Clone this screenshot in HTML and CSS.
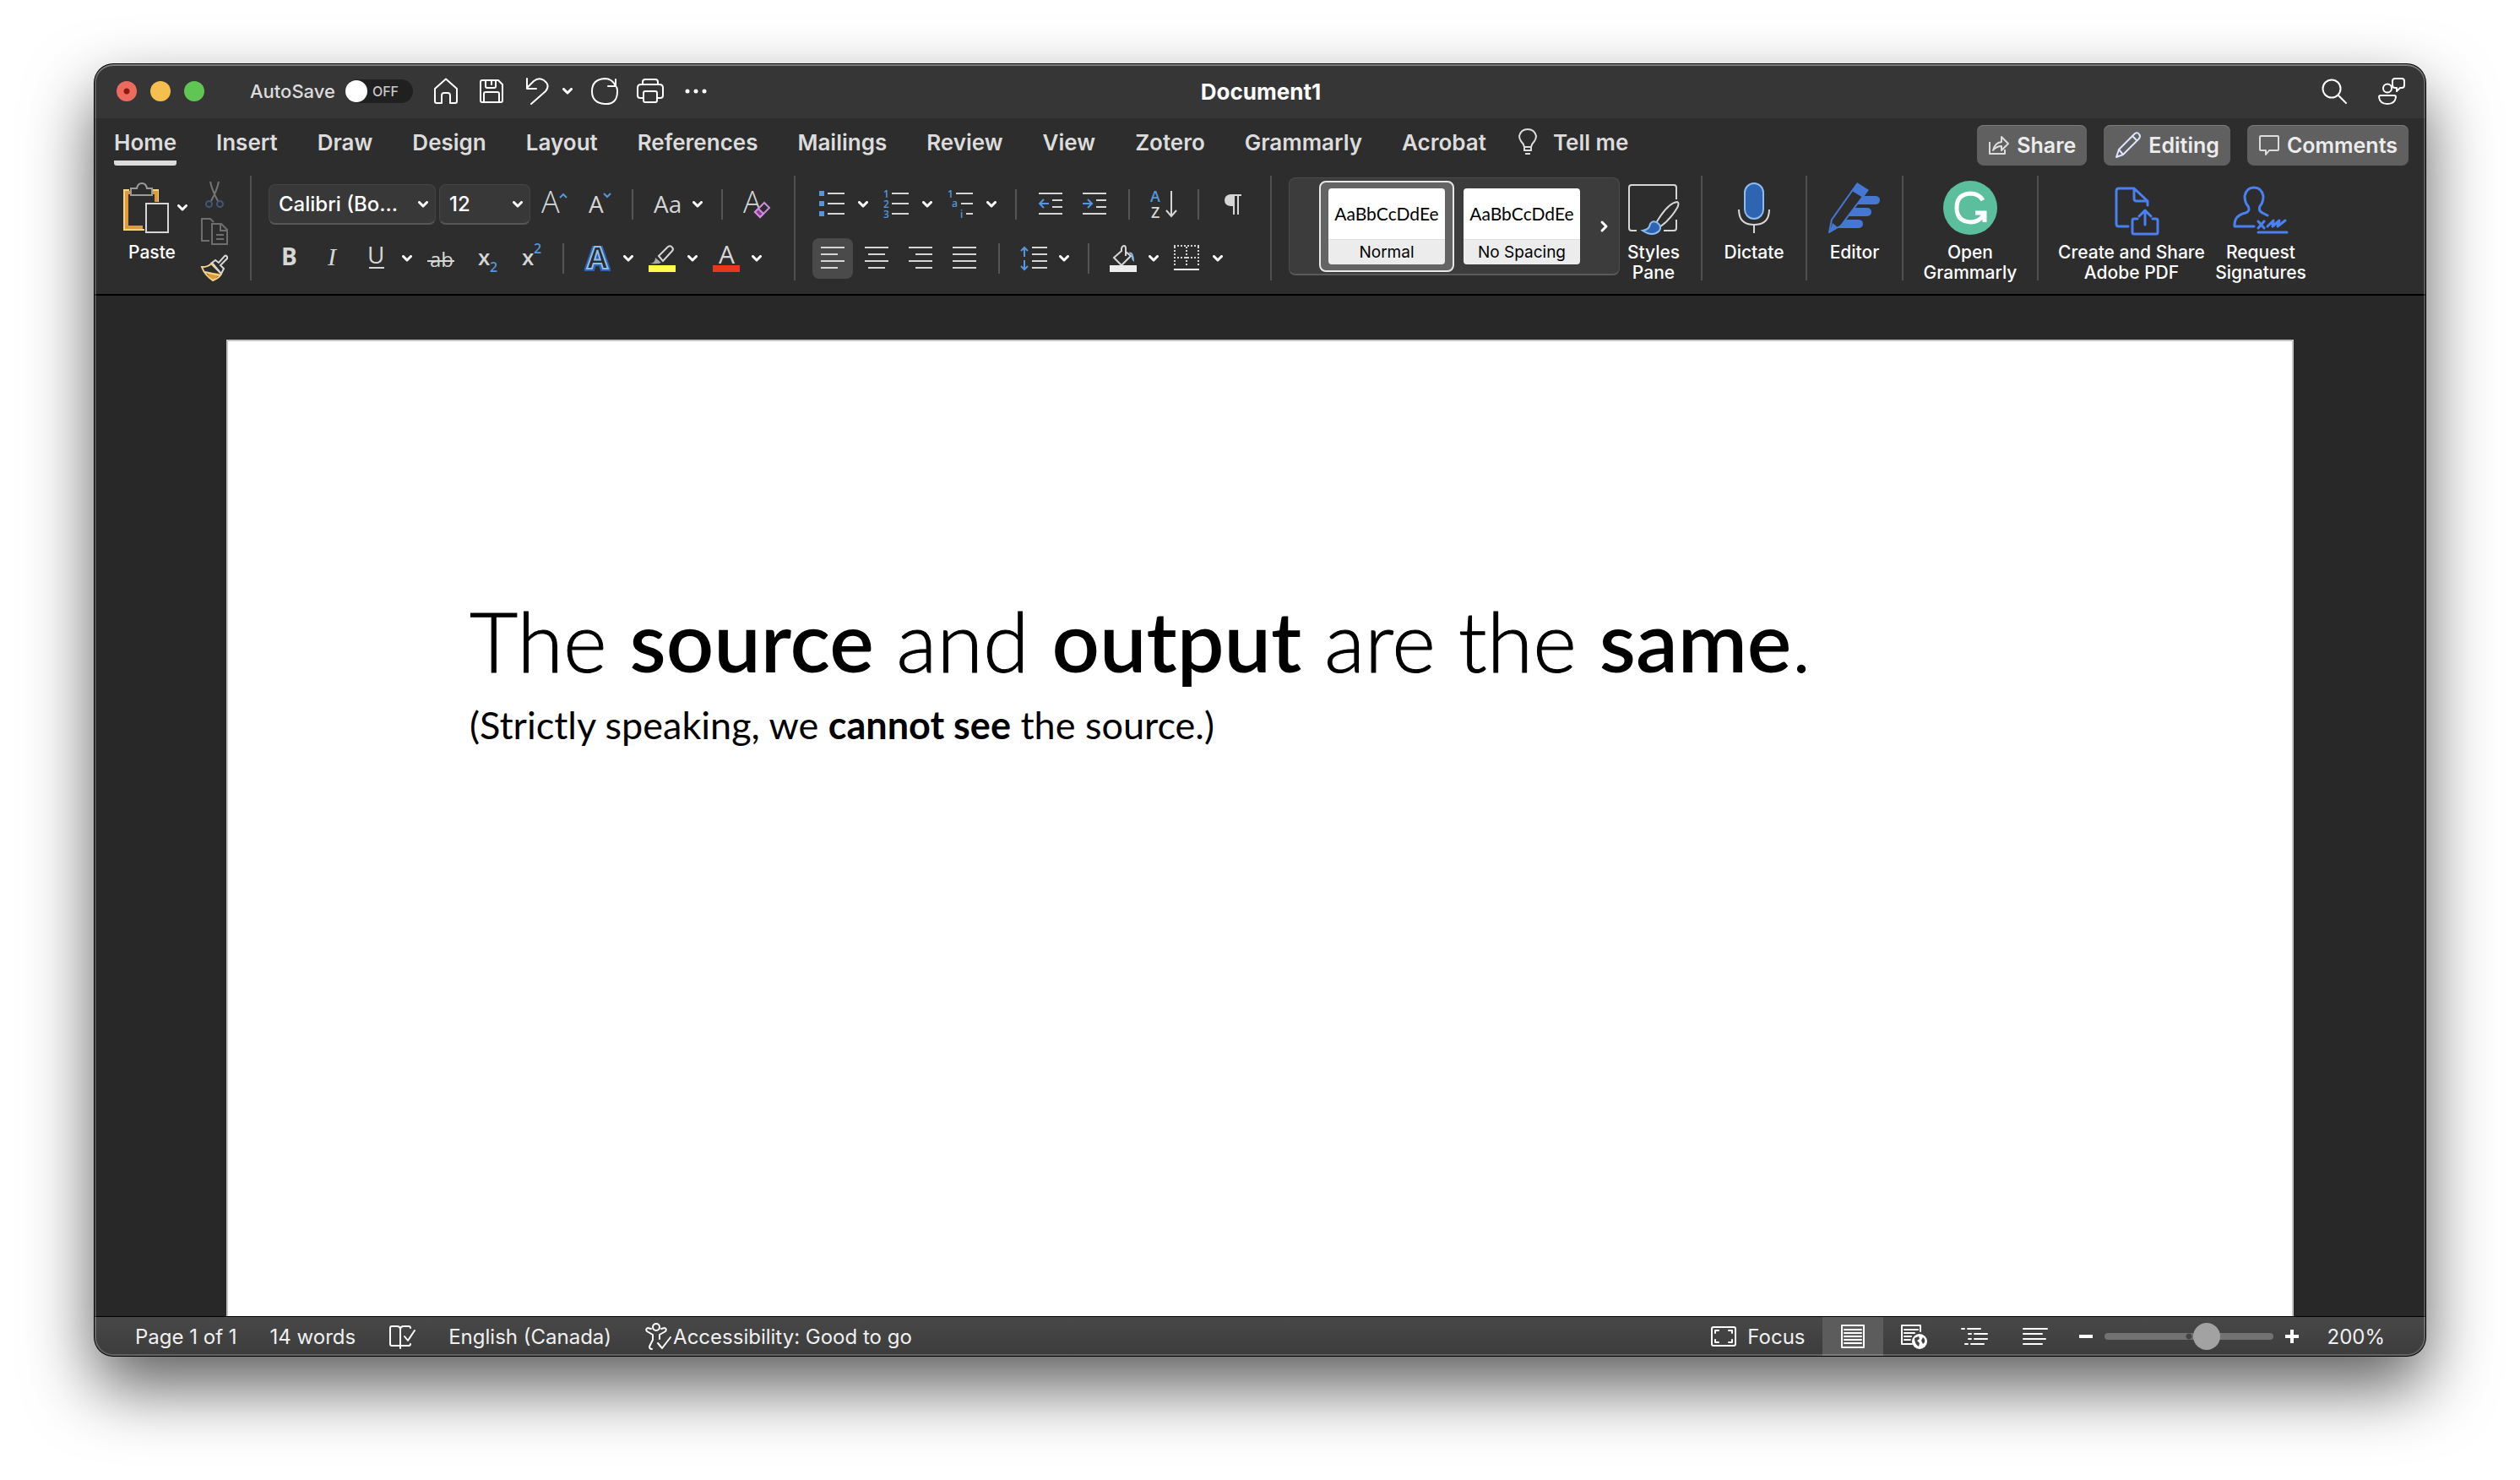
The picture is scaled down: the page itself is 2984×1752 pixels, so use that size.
FILE: index.html
```html
<!DOCTYPE html>
<html lang="en">
<head>
<meta charset="utf-8">
<title>Document1</title>
<link rel="stylesheet" href="styles.css">
</head>
<body>
<svg class="defs" aria-hidden="true">
  <symbol id="chev" viewBox="0 0 12 8"><path d="M1.5 1.5 6 6l4.500-4.500" fill="none" stroke="#fff" stroke-width="3" stroke-linecap="round" stroke-linejoin="round"/></symbol>
</svg>
<div class="window">
  <header class="titlebar">
    <div class="title-left">
      <div class="lights">
        <button class="light close" aria-label="Close"></button>
        <button class="light minimize" aria-label="Minimize"></button>
        <button class="light maximize" aria-label="Zoom"></button>
      </div>
      <label class="autosave"><span>AutoSave</span><input type="checkbox" class="toggle-input"><span class="toggle">OFF</span></label>
      <nav class="quick">
        <button aria-label="Home"><svg class="ic" viewBox="0 0 32 32"><path d="M16 1.500 3 13v15q0 2 2 2h6v-9q0-3 3-3h4q3 0 3 3v9h6q2 0 2-2V13z"/></svg></button>
        <button aria-label="Save"><svg class="ic" viewBox="0 0 32 32"><path d="M5 3h19l5 5v19q0 2-2 2H5q-2 0-2-2V5q0-2 2-2zM9 3v7q0 2 2 2h8q2 0 2-2V3M16 4v4M7 29V19q0-2 2-2h14q2 0 2 2v10"/></svg></button>
        <span class="pair"><button aria-label="Undo"><svg class="ic" viewBox="0 0 32 32"><path d="M4 1v12h11M4 12 12 4Q18-1 24 3q8 6 2 13L9 31"/></svg></button><button aria-label="Undo options"><svg class="chev"><use href="#chev"/></svg></button></span>
        <button aria-label="Redo"><svg class="ic" viewBox="0 0 32 32"><path d="M29 2v8h-9M29 10Q25 1 16 1 1 2 1 16t15 15 15-15q0-3-1-5"/></svg></button>
        <button aria-label="Print"><svg class="ic" viewBox="0 0 32 32"><path d="M7 8V5q0-3 3-3h12q3 0 3 3v3M8 24H4q-3 0-3-3v-9q0-4 4-4h22q4 0 4 4v9q0 3-3 3h-4M8 18q0-2 2-2h12q2 0 2 2v9q0 2-2 2H10q-2 0-2-2z"/></svg></button>
        <button aria-label="More commands"><svg class="ic" viewBox="0 0 32 32"><g fill="#fff" stroke="none"><circle cx="6" cy="16" r="2.500"/><circle cx="16" cy="16" r="2.500"/><circle cx="26" cy="16" r="2.500"/></g></svg></button>
      </nav>
    </div>
    <h1 class="doc-name">Document1</h1>
    <div class="title-right">
      <button aria-label="Search"><svg class="ic" viewBox="0 0 32 32"><circle cx="13" cy="13" r="10.500"/><path d="m21 21 9 9"/></svg></button>
      <button aria-label="Presence"><svg class="ic" viewBox="0 0 32 32"><circle cx="11" cy="12.500" r="5"/><path d="M3 21h16q2 0 2 2-1 8-10 8T1 23q0-2 2-2zM20 1h8q3 0 3 3v5q0 3-3 3h-2l-4 4v-4h-2q-3 0-3-3V4q0-3 3-3z"/></svg></button>
    </div>
  </header>

  <div class="tabbar">
    <nav class="tabs">
      <a href="#home" class="active">Home</a><a href="#insert">Insert</a><a href="#draw">Draw</a><a href="#design">Design</a><a href="#layout">Layout</a><a href="#references">References</a><a href="#mailings">Mailings</a><a href="#review">Review</a><a href="#view">View</a><a href="#zotero">Zotero</a><a href="#grammarly">Grammarly</a><a href="#acrobat">Acrobat</a>
      <a href="#tellme" class="tell"><svg viewBox="0 0 24 32" width="24" height="32"><path d="M8 22Q7 18 4 15 2 12 2 9 4 1 12 1t10 8q0 3-2 6-3 3-4 7zM8 22v4h8v-4M9 30h6" fill="none" stroke="#dcdcdc" stroke-width="2"/></svg>Tell me</a>
    </nav>
    <div class="actions">
      <button><svg viewBox="0 0 26 26" width="26" height="26" class="act"><path d="M2 9v14h18v-5M6 19Q8 10 16 9V3l8 8-8 8v-5q-6 0-10 5z"/></svg>Share</button>
      <button><svg viewBox="0 0 32 32" width="32" height="32" class="act pen"><path d="m2 30 3-9L24 2q3-2 5 1 2 2 0 5L10 27zM5 21l5 6M21 5l6 6"/></svg>Editing</button>
      <button><svg viewBox="0 0 26 26" width="26" height="26" class="act"><path d="M3 2h20q1 0 1 1v15q0 1-1 1H13l-4 5v-5H3q-1 0-1-1V3q0-1 1-1z"/></svg>Comments</button>
    </div>
  </div>

  <section class="ribbon" aria-label="Home">
    <div class="group clip">
      <button class="big paste">
        <span class="paste-top"><svg viewBox="0 0 56 64" width="56" height="64"><path d="M9 11H3v47h24M37 11h6v14" fill="none" stroke="#f3d58a" stroke-width="2"/><path d="M12 14H6v41h19M36 14h5v11" fill="none" stroke="#dc9a3a" stroke-width="4"/><path d="M11 9h7q1-6 6-6t6 6h6v8H11z" fill="#2d2d2d" stroke="#9a9a9a" stroke-width="2"/><path d="M29 27h26v34H29z" fill="#2d2d2d" stroke="#d6d6d6" stroke-width="2"/></svg><svg class="chev"><use href="#chev"/></svg></span>
        <span>Paste</span>
      </button>
      <div class="mini">
        <button aria-label="Cut"><svg class="i" viewBox="0 0 32 32"><path d="M11 1q2 10 9 23M21 1q-2 10-9 23" fill="none" stroke="#747474" stroke-width="2"/><g fill="none" stroke="#40577a" stroke-width="2"><circle cx="9.500" cy="27.500" r="3.500"/><circle cx="22.500" cy="27.500" r="3.500"/></g></svg></button>
        <button aria-label="Copy"><svg class="i" viewBox="0 0 32 32"><path d="M10 27H1V1h10l4 4M13 31V7h11l7 7v17zM23 7v8h8M18 20h9M18 25h9" fill="none" stroke="#6e6e6e" stroke-width="2"/></svg></button>
        <button aria-label="Format Painter"><svg class="i" viewBox="0 0 32 32"><path d="M6 20l17 2-9 9z" fill="#dc9a3a"/><path d="M1 14q8 0 11-4l12 12q-2 5-10 8Q4 23 1 14zM5 20l17 4" fill="none" stroke="#f3d58a" stroke-width="2"/><path d="m13 9 4-3 4 3 7-8q2-1 3 1v2l-8 8 4 4-3 6z" fill="#2d2d2d" stroke="#d6d6d6" stroke-width="2"/></svg></button>
      </div>
    </div>

    <div class="group rows">
      <div class="row">
        <label class="combo font"><select aria-label="Font"><option>Calibri (Bo...</option></select><svg class="chev"><use href="#chev"/></svg></label>
        <label class="combo size"><select aria-label="Font size"><option>12</option></select><svg class="chev"><use href="#chev"/></svg></label>
        <button class="tool" aria-label="Increase font size"><svg class="i" viewBox="0 0 32 32"><text x="1" y="26" class="t36">A</text><path class="b" d="m23 8 4-4 4 4"/></svg></button>
        <button class="tool" aria-label="Decrease font size"><svg class="i" viewBox="0 0 32 32"><text x="5" y="26" class="t28">A</text><path class="b" d="m23 3 4 4 4-4"/></svg></button>
        <i class="sep"></i>
        <button class="tool split" aria-label="Change case"><svg class="i" viewBox="0 0 32 32"><text x="0" y="26" class="t28">Aa</text></svg><svg class="chev"><use href="#chev"/></svg></button>
        <i class="sep"></i>
        <button class="tool" aria-label="Clear formatting"><svg class="i" viewBox="0 0 32 32"><text x="0" y="26" class="t36">A</text><path d="M13 25 25 13l7 7-12 12-7-7z" fill="#2d2d2d"/><path d="m14 25 11-11 6 6-11 11z" fill="none" stroke="#cf8ddb" stroke-width="2"/><path d="m14 25 4-4 6 6-4 4z" fill="#8e3a9e" stroke="#cf8ddb" stroke-width="2"/></svg></button>
      </div>
      <div class="row">
        <button class="tool" aria-label="Bold"><svg class="i" viewBox="0 0 32 32"><text x="7" y="24" class="t28 bold">B</text></svg></button>
        <button class="tool" aria-label="Italic"><svg class="i" viewBox="0 0 32 32"><text x="10" y="24" class="t30 ital">I</text></svg></button>
        <button class="tool split" aria-label="Underline"><svg class="i" viewBox="0 0 32 32"><text x="5" y="22" class="t28">U</text><path class="g" d="M7 27h18"/></svg><svg class="chev"><use href="#chev"/></svg></button>
        <button class="tool" aria-label="Strikethrough"><svg class="i" viewBox="0 0 32 32"><text x="3" y="26" class="t24">ab</text><path class="g" d="M0 19h32"/></svg></button>
        <button class="tool" aria-label="Subscript"><svg class="i" viewBox="0 0 32 32"><text x="8" y="24" class="t26 semi">x</text><text x="22" y="32" class="t16 blue">2</text></svg></button>
        <button class="tool" aria-label="Superscript"><svg class="i" viewBox="0 0 32 32"><text x="8" y="24" class="t26 semi">x</text><text x="22" y="10" class="t16 blue">2</text></svg></button>
        <i class="sep"></i>
        <button class="tool split" aria-label="Text effects"><svg class="i" viewBox="0 0 32 32"><text x="3" y="28" class="effect">A</text></svg><svg class="chev"><use href="#chev"/></svg></button>
        <button class="tool split" aria-label="Highlight"><svg class="i" viewBox="0 0 32 32"><path d="M2 22q6-1 6-7l7 6q-4 2-13 1z" fill="#a8a8a8"/><path class="g" d="M12 13 23 2q3-2 5 1 2 2 0 4L17 19z"/><path d="M0 24h32v8H0z" fill="#ffff4a"/></svg><svg class="chev"><use href="#chev"/></svg></button>
        <button class="tool split" aria-label="Font color"><svg class="i" viewBox="0 0 32 32"><text x="7" y="22" class="t30">A</text><path d="M0 24h32v8H0z" fill="#e9371e"/></svg><svg class="chev"><use href="#chev"/></svg></button>
      </div>
    </div>

    <div class="group rows">
      <div class="row">
        <button class="tool split" aria-label="Bullets"><svg class="i" viewBox="0 0 32 32"><path class="g" d="M10 3h20M10 15h20M10 27h20"/><path d="M0 0h6v6H0zM0 12h6v6H0zM0 24h6v6H0z" fill="#5596dc"/></svg><svg class="chev"><use href="#chev"/></svg></button>
        <button class="tool split" aria-label="Numbering"><svg class="i" viewBox="0 0 32 32"><path class="g" d="M10 3h20M10 15h20M10 27h20"/><text x="0" y="8" class="t12">1</text><text x="0" y="20" class="t12">2</text><text x="0" y="32" class="t12">3</text></svg><svg class="chev"><use href="#chev"/></svg></button>
        <button class="tool split" aria-label="Multilevel list"><svg class="i" viewBox="0 0 32 32"><path class="g" d="M10 3h20M16 15h14M22 27h8"/><text x="0" y="8" class="t12">1</text><text x="5" y="19" class="t12">a</text><text x="15" y="32" class="t12">i</text></svg><svg class="chev"><use href="#chev"/></svg></button>
        <i class="sep"></i>
        <button class="tool" aria-label="Decrease indent"><svg class="i" viewBox="0 0 32 32"><path class="g" d="M2 3h28M18 11h12M18 19h12M2 27h28"/><path class="b" d="M14 15H3m5-5-5 5 5 5"/></svg></button>
        <button class="tool" aria-label="Increase indent"><svg class="i" viewBox="0 0 32 32"><path class="g" d="M2 3h28M18 11h12M18 19h12M2 27h28"/><path class="b" d="M2 15h11m-5-5 5 5-5 5"/></svg></button>
        <i class="sep"></i>
        <button class="tool" aria-label="Sort"><svg class="i" viewBox="0 0 32 32"><text x="0" y="13" class="t18 blue">A</text><text x="1" y="32" class="t18">Z</text><path class="g" d="M25 0v30m-6-7 6 7 6-7"/></svg></button>
        <i class="sep"></i>
        <button class="tool" aria-label="Show formatting marks"><svg class="i" viewBox="0 0 32 32"><path d="M13 4h13v2h-3v22h-2V6h-3v22h-2V18h-3q-7-1-7-7t7-7z" fill="#d6d6d6"/></svg></button>
      </div>
      <div class="row">
        <button class="tool on" aria-label="Align left"><svg class="i" viewBox="0 0 32 32"><path class="g" d="M2 3h28M2 11h20M2 19h28M2 27h20"/></svg></button>
        <button class="tool" aria-label="Center"><svg class="i" viewBox="0 0 32 32"><path class="g" d="M2 3h28M6 11h20M2 19h28M6 27h20"/></svg></button>
        <button class="tool" aria-label="Align right"><svg class="i" viewBox="0 0 32 32"><path class="g" d="M2 3h28M10 11h20M2 19h28M10 27h20"/></svg></button>
        <button class="tool" aria-label="Justify"><svg class="i" viewBox="0 0 32 32"><path class="g" d="M2 3h28M2 11h28M2 19h28M2 27h28"/></svg></button>
        <i class="sep"></i>
        <button class="tool split" aria-label="Line spacing"><svg class="i" viewBox="0 0 32 32"><path class="g" d="M14 3h18M14 11h18M14 19h18M14 27h18"/><path class="b" d="M5 14V3M1 7l4-4 4 4M5 18v11m-4-4 4 4 4-4"/></svg><svg class="chev"><use href="#chev"/></svg></button>
        <i class="sep"></i>
        <button class="tool split" aria-label="Shading"><svg class="i" viewBox="0 0 32 32"><path d="M22 9q7-3 7 11-4-3-3-8z" fill="#8ab6e8"/><path class="g" d="M19 13V4q0-3-2-3t-3 3v3L5 15l9 9 11-11-6-5"/><path d="M0 24h32v8H0z" fill="#ededed"/></svg><svg class="chev"><use href="#chev"/></svg></button>
        <button class="tool split" aria-label="Borders"><svg class="i" viewBox="0 0 32 32"><path d="M0 1h30M0 15h30M1 2v24M15 2v24M29 2v24" fill="none" stroke="#d6d6d6" stroke-width="2" stroke-dasharray="2 2"/><path d="M0 29h30" stroke="#fff" stroke-width="2"/></svg><svg class="chev"><use href="#chev"/></svg></button>
      </div>
    </div>

    <div class="group styles">
      <div class="gallery">
        <button class="tile selected"><span class="sample">AaBbCcDdEe</span><span class="name">Normal</span></button>
        <button class="tile"><span class="sample">AaBbCcDdEe</span><span class="name">No Spacing</span></button>
        <button class="more" aria-label="More styles"><svg width="10" height="14" viewBox="0 0 10 14"><path d="m2 2 5 5-5 5" fill="none" stroke="#fff" stroke-width="3" stroke-linecap="round" stroke-linejoin="round"/></svg></button>
      </div>
      <button class="big w72"><svg viewBox="0 0 64 64" width="64" height="64"><path d="M12 59H6q-3 0-3-3V8q0-3 3-3h50q3 0 3 3v14M59 46v10q0 3-3 3H44" fill="none" stroke="#d6d6d6" stroke-width="2"/><path d="M35 50q14-24 25-25 3 1 0 7-8 14-21 23z" fill="#2d2d2d" stroke="#d6d6d6" stroke-width="2"/><path d="M19 59q8-1 9-8 3-5 9-1 5 4 2 9-8 8-20 0z" fill="#2f64b2" stroke="#8cbcf0" stroke-width="2"/></svg><span>Styles<br>Pane</span></button>
    </div>

    <div class="group">
      <button class="big w82"><svg viewBox="0 0 64 64" width="64" height="64"><path d="M14 34q0 18 18 18t18-18M32 52v10" fill="none" stroke="#d6d6d6" stroke-width="2"/><rect x="21" y="3" width="22" height="42" rx="11" fill="#2f64b2" stroke="#8cbcf0" stroke-width="2"/></svg><span>Dictate</span></button>
    </div>

    <div class="group">
      <button class="big w72"><svg viewBox="0 0 64 64" width="64" height="64"><path d="m34 18 22 0q6 0 6 5t-6 5H28zM25 32h21q6 0 6 5t-6 5H18zM15 46h21q6 0 6 5t-6 5H10z" fill="#4677d2"/><path d="m2 61 3-15L34 5l12 8-30 40z" fill="#2d2d2d" stroke="#4677d2" stroke-width="2" stroke-linejoin="round"/><path d="m29 12 6-10 14 9-7 9zM2 62l4-12 6 5z" fill="#4677d2"/></svg><span>Editor</span></button>
    </div>

    <div class="group">
      <button class="big w118"><svg viewBox="0 0 64 64" width="64" height="64"><circle cx="32" cy="32" r="32" fill="#5bbf9e"/><path d="M47 23Q42 15 32 15q-16 1-16 17t16 17q12 0 17-11M38 38h11v11" fill="none" stroke="#fff" stroke-width="5"/></svg><span>Open<br>Grammarly</span></button>
    </div>

    <div class="group adobe">
      <button class="big w180"><svg viewBox="0 0 64 64" width="64" height="64" class="ad"><path d="M28 54H17q-3 0-3-3V12q0-3 3-3h18l16 15v5M35 9v12q0 3 3 3h13M39 45h-4q-2 0-2 2v14q0 2 2 2h26q2 0 2-2V47q0-2-2-2h-4M48 52V35m-7 7 7-7 7 7"/></svg><span>Create and Share<br>Adobe PDF</span></button>
      <button class="big w114"><svg viewBox="0 0 64 64" width="64" height="64" class="ad"><path d="M24 54H1q-1-13 13-16 6-2 3-8-4-4-4-12Q15 8 24 8t11 10q0 8-4 12-2 6 3 8l6 3M29 48l7 8m0-8-7 8M40 54l7-7-1 7 8-7-2 7 9-7M29 61h34"/></svg><span>Request<br>Signatures</span></button>
    </div>
  </section>

  <main class="canvas">
    <article class="page">
      <h2>The <b>source</b> and <b>output</b> are the <b>same</b>.</h2>
      <p>(Strictly speaking, we <b>cannot see</b> the source.)</p>
    </article>
  </main>

  <footer class="status">
    <div class="status-left">
      <span>Page 1 of 1</span>
      <span>14 words</span>
      <button aria-label="Proofing"><svg class="ic" viewBox="0 0 32 32"><path d="M13 27H4q-2 0-2-2V6q0-2 2-2h6q4 0 4 4 0-4 4-4h6q2 0 2 2M14 8v22M15 27h9q2 0 2-2M19 16l4 5 8-12"/></svg></button>
      <span>English (Canada)</span>
      <button class="acc"><svg class="ic" viewBox="0 0 32 32"><circle cx="14" cy="5" r="4"/><path d="m8 7-4-1q-3 1-1 4l7 4v6L6 28q0 3 3 3M20 7l4-1q3 1 1 4l-7 4v5M16 24l5 6L31 17"/></svg>Accessibility: Good to go</button>
    </div>
    <div class="status-right">
      <button class="focus"><svg class="ic" viewBox="0 0 32 32"><rect x="2" y="5" width="28" height="22" rx="2"/><path d="M6 12V9h4M22 9h4v3M26 20v3h-4M10 23H6v-3"/></svg>Focus</button>
      <button class="view on" aria-label="Print layout"><svg class="ic" viewBox="0 0 32 32"><path d="M3 3h26v26H3zM6 8h20M6 12h20M6 16h20M6 20h20M6 24h20"/></svg></button>
      <button class="view" aria-label="Web layout"><svg class="ic" viewBox="0 0 32 32"><path d="M14 25H2V3h22v7M5 8h16M5 12h12M5 16h8M5 20h7"/><circle cx="23" cy="22" r="9" fill="#fff" stroke="none"/><path d="M17 18l5-2 1 3-3 2 3 3-1 4q-5-3-5-10zM27 17q3 2 2 6l-2 2-2-4z" fill="#444" stroke="none"/></svg></button>
      <button class="view" aria-label="Outline"><svg class="ic" viewBox="0 0 32 32"><path d="M1 7h3M8 7h15M9 13h3M16 13h15M9 19h3M16 19h15M5 25h3M12 25h15"/></svg></button>
      <button class="view" aria-label="Draft"><svg class="ic" viewBox="0 0 32 32"><path d="M2 7h28M2 13h22M2 19h26M2 25h22"/></svg></button>
      <div class="zoom">
        <button aria-label="Zoom out"><svg viewBox="0 0 16 16" width="16" height="16"><path d="M0 8h16" stroke="#fff" stroke-width="4"/></svg></button>
        <input type="range" min="0" max="200" value="125" aria-label="Zoom">
        <button aria-label="Zoom in"><svg viewBox="0 0 16 16" width="16" height="16"><path d="M0 8h16M8 0v16" stroke="#fff" stroke-width="4"/></svg></button>
      </div>
      <span class="pct">200%</span>
    </div>
  </footer>
</div>
</body>
</html>
```
FILE: styles.css
```css
* { box-sizing: border-box; }
body {
  margin: 0;
  min-height: 100vh;
  padding: 76px 112px 147px;
  display: flex;
  background: #fff;
  color: #fff;
  font-family: Inter, "Liberation Sans", sans-serif;
}
button, select, input { font: inherit; color: inherit; margin: 0; }
button {
  display: flex;
  align-items: center;
  justify-content: center;
  padding: 0;
  border: 0;
  background: none;
}
a { color: inherit; text-decoration: none; }
svg { display: block; flex: none; overflow: visible; }
.defs { position: absolute; width: 0; height: 0; }
.chev { width: 12px; height: 8px; }
.ic { width: 32px; height: 32px; fill: none; stroke: #fff; stroke-width: 2; stroke-linejoin: round; stroke-linecap: round; }
.i { width: 32px; height: 32px; }

.window {
  position: relative;
  flex: 1;
  min-width: 0;
  display: flex;
  flex-direction: column;
  border-radius: 22px;
  overflow: hidden;
  background: #2d2d2d;
  box-shadow: 0 0 0 1px #000, 0 36px 80px rgba(0, 0, 0, .64);
}
.window::after {
  content: "";
  position: absolute;
  inset: 0;
  border-radius: 22px;
  box-shadow: inset 0 2px 0 rgba(255, 255, 255, .2), inset 0 0 0 2px rgba(255, 255, 255, .2);
  pointer-events: none;
}

/* Title bar */
.titlebar {
  height: 64px;
  display: grid;
  grid-template-columns: 1fr auto 1fr;
  align-items: center;
  padding: 0 24px 0 26px;
  background: #363636;
}
.title-left, .lights, .autosave, .quick, .pair, .title-right { display: flex; align-items: center; }
.lights { gap: 16px; }
.light { width: 24px; height: 24px; border-radius: 50%; }
.close { background: radial-gradient(circle, #8c1a10 3px, #ed6a5e 4px); }
.minimize { background: #f4bf4f; }
.maximize { background: #61c554; }
.autosave { margin-left: 54px; gap: 12px; color: #dcdcdc; font-size: 22px; font-weight: 500; }
.toggle-input { position: absolute; opacity: 0; }
.toggle {
  width: 80px;
  height: 28px;
  display: flex;
  align-items: center;
  gap: 6px;
  border-radius: 14px;
  background: #202020;
  color: #c8c8c8;
  font-size: 16px;
}
.toggle::before { content: ""; width: 26px; height: 26px; border-radius: 50%; background: #fff; }
.quick { margin-left: 23px; gap: 22px; }
.pair { gap: 14px; }
.doc-name { margin: 0; font-size: 26px; font-weight: 700; }
.title-right { justify-content: flex-end; gap: 36px; }

/* Tabs */
.tabbar {
  height: 64px;
  display: flex;
  justify-content: space-between;
  align-items: center;
  padding: 0 20px 0 23px;
}
.tabs { display: flex; gap: 47px; color: #dcdcdc; font-size: 26px; font-weight: 600; line-height: 42px; }
.tabs a { height: 48px; }
.tabs .active { border-bottom: 6px solid #dcdcdc; border-radius: 3px; }
.tabs .tell { display: flex; align-items: flex-start; gap: 18px; margin-left: -10px; }
.tell svg { margin-top: 4px; }
.actions { display: flex; gap: 20px; color: #ececec; font-size: 25px; font-weight: 600; }
.actions button { height: 48px; gap: 8px; padding: 0 13px; border-radius: 8px; background: #606060; box-shadow: inset 0 1px 0 #7c7c7c; }
.act { fill: none; stroke: #dcdcdc; stroke-width: 2; stroke-linejoin: round; }
.pen { stroke: #dfe3ff; }

/* Ribbon */
.ribbon {
  height: 146px;
  display: flex;
  align-items: flex-start;
  padding: 4px 0 0 18px;
  border-bottom: 2px solid #000;
}
.group { height: 124px; display: flex; padding: 0 20px; border-right: 2px solid #505050; flex: none; }
.group:last-child { border: 0; }
.clip { padding: 0 18px 0 0; }
.rows { flex-direction: column; gap: 16px; padding-top: 10px; }
.row { display: flex; align-items: center; gap: 4px; }
.sep { width: 2px; height: 36px; margin: 0 12px; background: #555; }
.tool { width: 48px; height: 48px; border-radius: 8px; }
.tool.split { width: 72px; gap: 14px; padding-left: 2px; }
.tool.on { background: #4a4a4a; }
.mini { width: 48px; display: flex; flex-direction: column; align-items: center; gap: 12px; padding-top: 6px; }
.combo { display: grid; align-items: center; height: 48px; }
.combo > * { grid-area: 1 / 1; }
.combo .chev { justify-self: end; margin-right: 9px; pointer-events: none; }
.combo select {
  appearance: none;
  width: 100%;
  height: 48px;
  padding: 0 11px;
  border: 1px solid #454545;
  border-bottom: 2px solid #585858;
  border-radius: 8px;
  background: #383838;
  font-size: 24px;
  font-weight: 500;
}
.font { width: 198px; }
.size { width: 108px; }

svg text { fill: #d6d6d6; font-family: "Open Sans", "Noto Sans", sans-serif; font-weight: 400; }
.t36 { font-size: 36px; font-weight: 300; }
.t30 { font-size: 30px; }
.t28 { font-size: 28px; }
.t26 { font-size: 26px; }
.t24 { font-size: 24px; }
.t18 { font-size: 18px; }
.t16 { font-size: 16px; }
.t12 { font-size: 12px; }
svg .bold { font-weight: 700; }
svg .semi, svg .t16, svg .t18, svg .t12 { font-weight: 600; }
svg .ital { font-family: "Liberation Serif", serif; font-style: italic; }
svg .blue, svg .t12 { fill: #5596dc; }
svg .effect {
  font-size: 36px;
  font-weight: 700;
  fill: #2d2d2d;
  stroke: #8cbcf0;
  stroke-width: 2;
  filter: drop-shadow(2px 0 0 #2f64b2) drop-shadow(-2px 0 0 #2f64b2) drop-shadow(0 2px 0 #2f64b2);
}
.g, .b { fill: none; stroke: #d6d6d6; stroke-width: 2; }
.b { stroke: #5596dc; stroke-width: 2; }

.big { flex-direction: column; justify-content: flex-start; gap: 8px; padding-top: 6px; font-size: 21px; font-weight: 500; line-height: 24px; white-space: nowrap; }
.big > span:last-child { margin-top: 1px; }
.paste { width: 100px; }
.paste-top { display: flex; align-items: center; gap: 10px; padding-left: 6px; }
.w72 { width: 72px; }
.w82 { width: 82px; }
.w114 { width: 114px; }
.w118 { width: 118px; }
.w180 { width: 180px; }
.adobe { gap: 6px; }
.ad { fill: none; stroke: #4a80f0; stroke-width: 3; stroke-linejoin: round; stroke-linecap: round; }
.styles { gap: 4px; }
.gallery {
  width: 392px;
  height: 116px;
  margin-top: 2px;
  display: flex;
  align-items: center;
  padding-left: 35px;
  border: 1px solid #4c4c4c;
  border-bottom: 2px solid #5a5a5a;
  border-radius: 8px;
  background: #3c3c3c;
}
.tile { width: 160px; height: 108px; flex-direction: column; padding: 7px 9px; border: 2px solid transparent; border-radius: 8px; color: #000; }
.tile.selected { border-color: #e8e8e8; background: #646464; }
.tile span { width: 100%; display: flex; align-items: center; justify-content: center; white-space: nowrap; }
.sample { flex: 1; background: #fff; border-radius: 4px 4px 0 0; font: 21px Lato, sans-serif; }
.name { height: 30px; background: #ececec; border-top: 1px solid #e0e0e0; border-radius: 0 0 4px 4px; font-size: 19px; }
.more { flex: 1; height: 100%; }

/* Document */
.canvas { flex: 1; display: flex; padding: 52px 156px 0; background: #282828; }
.page { flex: 1; padding: 288px 286px; background: #fff; color: #000; border: 2px solid #c4c4c4; border-bottom: 0; font-family: Lato, sans-serif; }
.page h2 { margin: 0; font-size: 99px; font-weight: 300; line-height: 132px; white-space: nowrap; -webkit-text-stroke: 1px #000; }
.page h2 b { font-weight: 600; -webkit-text-stroke: 0; }
.page p { margin: 0; font-size: 45px; line-height: 68px; white-space: nowrap; }

/* Status bar */
.status {
  height: 47px;
  display: flex;
  justify-content: space-between;
  padding: 0 48px;
  border-top: 1px solid #000;
  background: linear-gradient(#484848, #3c3c3c);
  font-size: 24px;
  color: #f0f0f0;
}
.status-left, .status-right, .zoom { display: flex; align-items: center; }
.status-left { gap: 39px; }
.acc { gap: 2px; }
.focus { gap: 12px; margin-right: 20px; }
.view { width: 72px; height: 46px; }
.view.on { background: #5c5c5c; }
.zoom { gap: 14px; margin-left: 16px; }
.pct { margin-left: 34px; }
.zoom input {
  appearance: none;
  width: 200px;
  height: 32px;
  background: none;
}
.zoom input::-webkit-slider-runnable-track {
  height: 8px;
  border-radius: 4px;
  background: radial-gradient(circle, #444 3px, #727272 4px);
}
.zoom input::-webkit-slider-thumb {
  appearance: none;
  width: 32px;
  height: 32px;
  margin-top: -12px;
  border-radius: 50%;
  background: #a2a2a2;
}
```
